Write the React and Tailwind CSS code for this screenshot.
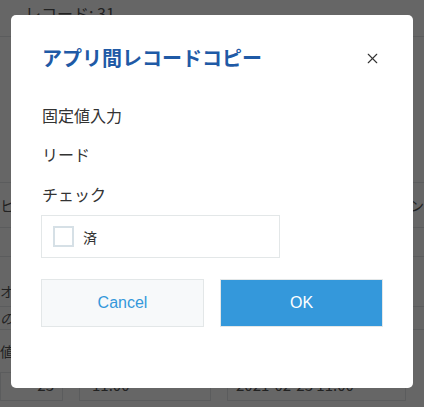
import { X } from "lucide-react";

// Record copy dialog shown over a dimmed record page

const jp = "font-['Noto_Sans_CJK_JP',sans-serif]";

function BackgroundPage() {
  // Only the edges of this page show around the dialog.
  return (
    <div className={`flex h-full w-full flex-col bg-white text-[#555] ${jp}`}>
      <div className="flex h-[37px] shrink-0 items-start border-b border-[#e3e7e8] pl-[25px] pt-[1px] text-[16px] leading-[24px]">
        レコード: 31
      </div>
      <div className="h-[145px] shrink-0" />
      <div className="flex h-[46px] shrink-0 items-center justify-between border-y border-[#e3e7e8] text-[14px]">
        <span>ヒ</span>
        <span>ン</span>
      </div>
      <div className="h-[29px] shrink-0 border-b border-[#e3e7e8]" />
      <div className="flex h-[50px] shrink-0 items-end border-b border-[#e3e7e8] pb-[4px] text-[14px]">
        <span>オ</span>
      </div>
      <div className="flex h-[23px] shrink-0 items-center border-b border-[#e3e7e8] text-[14px] italic">
        <span>の</span>
      </div>
      <div className="flex h-[42px] shrink-0 items-center text-[14px]">
        <span>値</span>
      </div>
      <div className="flex shrink-0 gap-[16px] text-[15px]">
        <div className="h-[29px] w-[63px] border border-[#e3e7e8] pr-[8px] pt-[1px] text-right">-23</div>
        <div className="h-[29px] w-[132px] border border-[#e3e7e8] pl-[12px] pt-[1px]">11:00</div>
        <div className="h-[29px] w-[179px] border border-[#e3e7e8] pl-[8px] pt-[1px]">2021-02-23 11:00</div>
      </div>
    </div>
  );
}

export default function App() {
  return (
    <div className="relative h-[407px] w-[424px] overflow-hidden">
      <BackgroundPage />
      <div className="absolute inset-0 bg-black/60" />
      <div className="absolute inset-0 flex items-start justify-center pt-[15px]">
        <div className={`flex h-[373px] w-[402px] flex-col rounded-[5px] bg-white px-[30px] pt-[29px] ${jp}`}>
          <div className="flex items-center justify-between">
            <h2 className="pl-[1px] text-[20px] font-bold leading-[28px] text-[#1f5aa6]">
              アプリ間レコードコピー
            </h2>
            <button type="button" className="flex h-[22px] w-[22px] items-center justify-center text-[#333]">
              <X size={17} strokeWidth={1.6} />
            </button>
          </div>

          <div className="mt-[31px] pl-[1px] text-[16px] leading-[24px] text-[#333]">固定値入力</div>
          <div className="mt-[15px] pl-[1px] text-[16px] leading-[24px] text-[#333]">リード</div>
          <div className="mt-[16px] pl-[1px] text-[16px] leading-[24px] text-[#333]">チェック</div>

          <label className="mt-[9px] flex h-[43px] w-[239px] items-center border border-[#e3e7e8] pl-[11px]">
            <span className="h-[21px] w-[21px] border-2 border-[#d6e0e6] bg-white" />
            <span className="ml-[9px] text-[14px] leading-[20px] text-[#333]">済</span>
          </label>

          <div className="mt-[21px] flex gap-[16px] font-['Liberation_Sans',Arial,sans-serif]">
            <button type="button" className="h-[48px] w-[163px] border border-[#e3e7e8] bg-[#f7f9fa] text-[16px] text-[#3498db]">
              Cancel
            </button>
            <button type="button" className="h-[48px] w-[163px] border border-[#e3e7e8] bg-[#3498db] text-[16px] text-white">
              OK
            </button>
          </div>
        </div>
      </div>
    </div>
  );
}
